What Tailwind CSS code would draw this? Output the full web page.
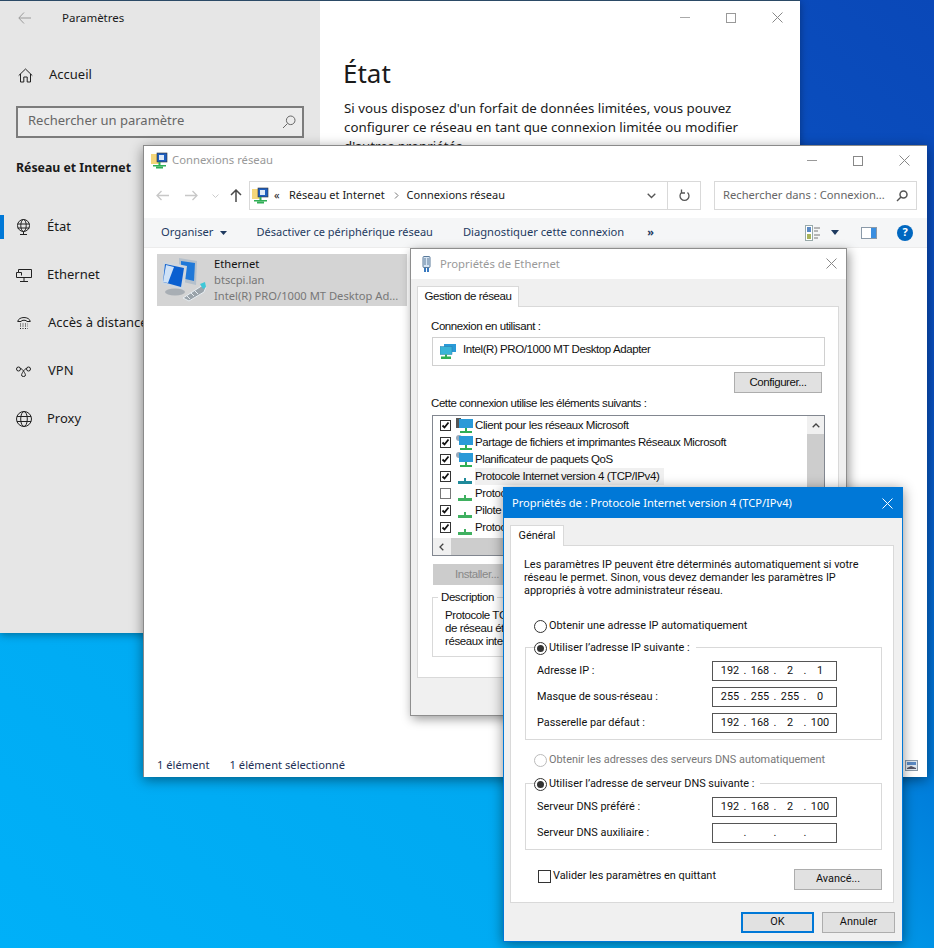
<!DOCTYPE html>
<html lang="fr">
<head>
  <meta charset="UTF-8" />
  <title>Propriétés de : Protocole Internet version 4 (TCP/IPv4)</title>
  <script src="https://cdn.jsdelivr.net/npm/@tailwindcss/browser@4"></script>
</head>
<body class="m-0 overflow-hidden">
<div class="relative w-[934px] h-[948px] overflow-hidden font-['Noto_Sans',sans-serif] text-[#1a1a1a] bg-[linear-gradient(222deg,#0a48b8_0%,#0a50c0_22%,#0078d8_42%,#00a8f0_62%,#00b0f8_100%)]">

  <!-- Parametres window -->
  <div class="absolute left-0 top-0 w-[800px] h-[633px] flex border-t border-[#2b4a66] shadow-[0_2px_8px_rgba(0,0,0,0.35)]">
    <div class="w-[320px] bg-[#e6e6e6] shrink-0 flex flex-col">
      <div class="h-[33px] flex items-center pl-[18px] gap-[31px]">
        <svg class="w-[13px] h-[12px]" viewBox="0 0 13 12" fill="none" stroke="#9a9a9a" stroke-width="1"><path d="M6 .5 .8 6 6 11.5M1 6h12"/></svg>
        <span class="text-[11.5px]">Paramètres</span>
      </div>
      <div class="h-[48px] mt-[17px] flex items-center pl-[18px] gap-[16px]">
        <svg class="w-[15px] h-[15px]" viewBox="0 0 15 15" fill="none" stroke="#222" stroke-width="1"><path d="M.7 7.6 7.5 1l6.8 6.6M2.5 6v8h3.3V9h3.4v5h3.3V6"/></svg>
        <span class="text-[13px]">Accueil</span>
      </div>
      <div class="mx-[16px] mt-[7px] h-[32px] border-2 border-[#7c7c7c] bg-[#ececec] flex items-center justify-between pl-[10px] pr-[6px]">
        <span class="text-[13px] text-[#666] -mt-[2px]">Rechercher un paramètre</span>
        <svg class="w-[14px] h-[14px]" viewBox="0 0 14 14" fill="none" stroke="#666" stroke-width="1"><circle cx="8.7" cy="5.3" r="4.3"/><path d="M5.5 8.5 1 13"/></svg>
      </div>
      <div class="pl-[16px] mt-[19px] h-[22px] flex items-center text-[12.3px] font-bold">Réseau et Internet</div>
      <div class="mt-[24px] flex flex-col">
        <div class="relative h-[48px] flex items-center pl-[16px] gap-[16px]">
          <div class="absolute left-0 top-[12px] w-[4px] h-[24px] bg-[#0078d7]"></div>
          <svg class="w-[15px] h-[16px]" viewBox="0 0 15 16" fill="none" stroke="#222" stroke-width="1"><circle cx="7.5" cy="6.5" r="6"/><ellipse cx="7.5" cy="6.5" rx="2.7" ry="6"/><path d="M1.5 5h12M1.5 9h12M7.5 12.5v3M4 15.5h7"/></svg>
          <span class="text-[13px]">État</span>
        </div>
        <div class="h-[48px] flex items-center pl-[16px] gap-[15px]">
          <svg class="w-[16px] h-[13px]" viewBox="0 0 16 13" fill="none" stroke="#222" stroke-width="1"><path d="M.5 3.5h2v-3h13v8H.5zM2.5 3.500h3v3M8 8.500v4M4 12.500h8"/></svg>
          <span class="text-[13px]">Ethernet</span>
        </div>
        <div class="h-[48px] flex items-center pl-[17px] gap-[17px] whitespace-nowrap">
          <svg class="w-[14px] h-[14px]" viewBox="0 0 14 14" fill="none" stroke="#222" stroke-width="1"><path d="M.7 5.5C1.5 .2 12.5 .2 13.3 5.5H10C9.8 3.8 4.2 3.8 4 5.5z"/><path stroke-dasharray="1 1.5" d="M3 8h8M3 10h8M3 12.5h8"/></svg>
          <span class="text-[13px]">Accès à distance</span>
        </div>
        <div class="h-[48px] flex items-center pl-[16px] gap-[17px]">
          <svg class="w-[15px] h-[11px]" viewBox="0 0 15 11" fill="none" stroke="#222" stroke-width="1"><circle cx="2.5" cy="3" r="2"/><circle cx="12.5" cy="3" r="2"/><path d="M4.500 2.500C6.500 2.500 9.500 8 9.500 9a2 1.500 0 0 1-4 0C5.500 8 8.500 2.500 10.500 2.500"/></svg>
          <span class="text-[13px]">VPN</span>
        </div>
        <div class="h-[48px] flex items-center pl-[16px] gap-[15px]">
          <svg class="w-[16px] h-[16px]" viewBox="0 0 16 16" fill="none" stroke="#222" stroke-width="1"><circle cx="8" cy="8" r="7.5"/><ellipse cx="8" cy="8" rx="3.3" ry="7.5"/><path d="M1 5.5h14M1 10.5h14"/></svg>
          <span class="text-[13px]">Proxy</span>
        </div>
      </div>
    </div>
    <div class="flex-1 bg-white relative">
      <div class="absolute right-0 top-0 flex h-[33px] items-center">
        <div class="w-[46px] flex justify-center"><div class="w-[10px] h-px bg-[#aaa]"></div></div>
        <div class="w-[46px] flex justify-center"><div class="w-[10px] h-[10px] border border-[#999]"></div></div>
        <div class="w-[46px] flex justify-center"><svg class="w-[11px] h-[11px]" viewBox="0 0 11 11" stroke="#888"><path d="M.5.5l10 10M10.5.5l-10 10"/></svg></div>
      </div>
      <h1 class="pl-[23px] pt-[54px] text-[26px] leading-[36px] font-normal">État</h1>
      <p class="pl-[24px] pt-[8px] text-[13.3px] leading-[19px] w-[420px]">Si vous disposez d'un forfait de données limitées, vous pouvez configurer ce réseau en tant que connexion limitée ou modifier d'autres propriétés.</p>
    </div>
  </div>

  <!-- Explorer window -->
  <div class="absolute left-[143px] top-[145px] w-[784px] h-[632px] bg-white border-l border-t border-[#8a8a8a] shadow-[0_3px_12px_rgba(0,0,0,0.45)] flex flex-col">
    <div class="h-[35px] shrink-0 flex items-center pl-[7px] pb-[6px] gap-[4px] relative">
      <svg class="w-[17px] h-[17px]" viewBox="0 0 17 17"><path fill="#f4d67a" d="M0 2h7l1 1h1v9H0z"/><rect x="6" y="1" width="10" height="9" fill="#1f5fbf" stroke="#333" stroke-width=".6"/><rect x="8" y="3" width="5" height="5" fill="#dfeaf8"/><path fill="#2fae55" d="M2 13h13v1.5H2zM7.5 10h2v3h-2z"/><rect x="5" y="14.5" width="7" height="2" fill="#2fae55"/></svg>
      <span class="text-[11.3px] text-[#999]">Connexions réseau</span>
      <div class="absolute right-0 top-0 h-[29px] flex items-center">
        <div class="w-[46px] flex justify-center"><div class="w-[10px] h-px bg-[#999]"></div></div>
        <div class="w-[46px] flex justify-center"><div class="w-[10px] h-[10px] border border-[#888]"></div></div>
        <div class="w-[46px] flex justify-center"><svg class="w-[11px] h-[11px]" viewBox="0 0 11 11" stroke="#888"><path d="M.5.5l10 10M10.5.5l-10 10"/></svg></div>
      </div>
    </div>
    <div class="h-[29px] shrink-0 flex items-center">
      <div class="w-[105px] flex items-center pl-[12px] shrink-0">
        <svg class="w-[13px] h-[11px]" viewBox="0 0 13 11" fill="none" stroke="#c8c8c8" stroke-width="1.3"><path d="M5.5 1 1 5.5l4.5 4.5M1 5.5h12"/></svg>
        <svg class="w-[13px] h-[11px] ml-[16px]" viewBox="0 0 13 11" fill="none" stroke="#c8c8c8" stroke-width="1.3"><path d="M7.5 1 12 5.5 7.5 10M12 5.5H0"/></svg>
        <svg class="w-[7px] h-[4px] ml-[14px]" viewBox="0 0 7 4" fill="none" stroke="#ccc"><path d="M.5.5 3.5 3.5 6.5.5"/></svg>
        <svg class="w-[12px] h-[13px] ml-[11px]" viewBox="0 0 12 13" fill="none" stroke="#4a4a4a" stroke-width="1.5"><path d="M1 6 6 1l5 5M6 1v12"/></svg>
      </div>
      <div class="w-[452px] h-[29px] border border-[#d9d9d9] flex items-center shrink-0">
        <svg class="w-[17px] h-[17px] ml-[2px]" viewBox="0 0 17 17"><path fill="#f4d67a" d="M0 2h7l1 1h1v9H0z"/><rect x="6" y="1" width="10" height="9" fill="#1f5fbf" stroke="#333" stroke-width=".6"/><rect x="8" y="3" width="5" height="5" fill="#dfeaf8"/><path fill="#2fae55" d="M2 13h13v1.5H2zM7.5 10h2v3h-2z"/><rect x="5" y="14.5" width="7" height="2" fill="#2fae55"/></svg>
        <span class="text-[11px] ml-[5px] w-[15px] leading-none -mt-[3px]">«</span>
        <span class="text-[11px]">Réseau et Internet</span>
        <svg class="w-[5px] h-[7px] ml-[9px] mr-[8px]" viewBox="0 0 5 7" fill="none" stroke="#777"><path d="M1 .5 4 3.5 1 6.5"/></svg>
        <span class="text-[11px]">Connexions réseau</span>
        <svg class="w-[9px] h-[6px] ml-auto mr-[11px]" viewBox="0 0 9 6" fill="none" stroke="#555" stroke-width="1.3"><path d="M.7.7 4.5 4.5 8.3.7"/></svg>
        <div class="w-[33px] h-full border-l border-[#d9d9d9] flex items-center justify-center">
          <svg class="w-[11px] h-[13px]" viewBox="0 0 11 13" fill="none" stroke="#555" stroke-width="1.3"><path d="M2.5 3.5a4.5 4.5 0 1 0 6 0M2.5 .5v3.5H6"/></svg>
        </div>
      </div>
      <div class="w-[203px] ml-[13px] h-[29px] border border-[#d9d9d9] flex items-center justify-between pl-[8px] pr-[8px]">
        <span class="text-[11.2px] text-[#666] whitespace-nowrap">Rechercher dans : Connexion...</span>
        <svg class="w-[12px] h-[12px] shrink-0" viewBox="0 0 12 12" fill="none" stroke="#555" stroke-width="1.5"><circle cx="7.5" cy="4.5" r="3.5"/><path d="M5 7 1 11"/></svg>
      </div>
    </div>
    <div class="h-[30px] mt-[8px] shrink-0 bg-[#f5f6f7] border-b border-[#ececec] flex items-center text-[11.2px] text-[#1e3a5f]">
      <span class="ml-[17px]">Organiser</span>
      <svg class="w-[7px] h-[4px] ml-[6px]" viewBox="0 0 7 4" fill="#1e3a5f"><path d="M0 0h7L3.5 4z"/></svg>
      <span class="ml-[30px] text-[11px]">Désactiver ce périphérique réseau</span>
      <span class="ml-[30px]">Diagnostiquer cette connexion</span>
      <span class="ml-[23px] text-[11px] leading-none -mt-[3px] font-bold">»</span>
      <svg class="w-[16px] h-[16px] ml-auto" viewBox="0 0 16 16" fill="none"><rect x=".5" y=".5" width="7" height="15" fill="#fff" stroke="#9aa" /><rect x="2" y="2" width="4" height="5" fill="#5b8ac4"/><rect x="2" y="9" width="4" height="5" fill="#a8b35a"/><path stroke="#777" d="M9 3h6M9 6h4M9 10h6M9 13h4"/></svg>
      <svg class="w-[8px] h-[5px] ml-[10px]" viewBox="0 0 8 5" fill="#1e3a5f"><path d="M0 0h8L4 5z"/></svg>
      <svg class="w-[16px] h-[12px] ml-[22px]" viewBox="0 0 16 12"><rect x=".5" y=".5" width="15" height="11" fill="#fff" stroke="#8a99a8"/><rect x="10" y="1" width="5" height="10" fill="#3a8ee0"/></svg>
      <div class="w-[16px] h-[16px] ml-[20px] mr-[14px] rounded-full bg-[#0067c0] text-white text-[11px] font-bold flex items-center justify-center">?</div>
    </div>
    <div class="flex-1 relative">
      <div class="absolute left-[13px] top-[6px] w-[250px] h-[52px] bg-[#d4d4d4] flex items-center">
        <svg class="w-[46px] h-[46px] ml-[4px] shrink-0" viewBox="0 0 46 46">
          <path fill="#b4c0cc" d="M18 1l18 3-1 24-17-4z"/>
          <path fill="#1f78d8" d="M20 4l14 2-1 18-13-3z"/>
          <path fill="#d0d6dc" d="M2 4l24 5-3 24L0 27z"/>
          <path fill="#0a5fd0" d="M4 7l19 4-3 19L2 25z"/>
          <path fill="#cfe2f7" d="M5 8l8 2-6 16-5-1z"/>
          <ellipse cx="14" cy="35" rx="10" ry="3.5" fill="#a8aeb4"/>
          <path fill="#9aa3aa" stroke="#e8eef3" d="M22 41 42 28l3 2-2 5-15 9z"/>
          <path stroke="#e8eef3" d="M26 39l3 3M30 36l3 3M34 34l3 3"/>
          <path fill="#3ec8d8" d="M39 27l5-2 1 5-3 2z"/>
        </svg>
        <div class="ml-[7px] flex flex-col text-[11.2px] leading-[16px] whitespace-nowrap">
          <span class="text-[#111]">Ethernet</span>
          <span class="text-[#777]">btscpi.lan</span>
          <span class="text-[#777]">Intel(R) PRO/1000 MT Desktop Ad...</span>
        </div>
      </div>
      <div class="absolute left-[13px] bottom-[3px] flex text-[11.2px] text-[#1e2f55] gap-[20px]">
        <span>1 élément</span>
        <span>1 élément sélectionné</span>
      </div>
      <svg class="absolute right-[9px] bottom-[6px] w-[13px] h-[11px]" viewBox="0 0 13 11"><rect x=".5" y=".5" width="12" height="10" fill="#dfe8f0" stroke="#8a99a8"/><rect x="2" y="2" width="9" height="3" fill="#5b8ac4"/><path fill="#556" d="M2 8l4-2 5 2v1H2z"/></svg>
    </div>
  </div>

  <!-- Ethernet properties dialog -->
  <div class="absolute left-[410px] top-[248px] w-[437px] h-[468px] bg-[#f0f0f0] border border-[#8e8e8e] shadow-[2px_3px_10px_rgba(0,0,0,0.4)] flex flex-col font-['Liberation_Sans',sans-serif] text-[11.5px] tracking-[-0.42px] text-[#111]">
    <div class="h-[30px] shrink-0 bg-white flex items-center pl-[10px] gap-[8px] relative font-['Noto_Sans',sans-serif] tracking-normal">
      <svg class="w-[11px] h-[17px]" viewBox="0 0 11 17" fill="none"><rect x="2" y=".5" width="7" height="11" rx="1" fill="#d6e4f2" stroke="#5a7a9a"/><path stroke="#5a7a9a" d="M4 2v7M7 2v7"/><path stroke="#3a7ac0" stroke-width="2" d="M4 12v4M7 12v4"/></svg>
      <span class="text-[11.3px] text-[#999]">Propriétés de Ethernet</span>
      <svg class="absolute right-[9px] top-[9px] w-[11px] h-[11px]" viewBox="0 0 11 11" stroke="#888"><path d="M.5.5l10 10M10.5.5l-10 10"/></svg>
    </div>
    <div class="px-[6px] pt-[7px] flex-1 flex flex-col">
      <div class="relative z-10 w-[102px] h-[21px] -mb-px bg-white border border-b-0 border-[#d9d9d9] flex items-center justify-center">Gestion de réseau</div>
      <div class="w-[422px] h-[372px] bg-white border border-[#d9d9d9] px-[14px] relative">
        <div class="h-[30px] flex items-center pt-[10px] -ml-[1px]">Connexion en utilisant :</div>
        <div class="w-[393px] h-[29px] border border-[#d0d0d0] flex items-center pl-[7px] gap-[7px]">
          <svg class="w-[16px] h-[15px]" viewBox="0 0 16 15"><rect x="4" y="0" width="12" height="8" fill="#2a9ad8"/><rect x="0" y="2.5" width="12" height="8" fill="#3ab4d8" stroke="#2a7aa8" stroke-width=".5"/><path fill="#2fae55" d="M5 10.5h2v2H5zM1 12.5h10V15H1z"/></svg>
          <span class="-mt-[3px]">Intel(R) PRO/1000 MT Desktop Adapter</span>
        </div>
        <div class="flex justify-end pr-[2px] mt-[6px]">
          <div class="w-[88px] h-[21px] bg-[#e1e1e1] border border-[#adadad] flex items-center justify-center">Configurer...</div>
        </div>
        <div class="h-[22px] flex items-center -ml-[1px]">Cette connexion utilise les éléments suivants :</div>
        <div class="w-[393px] h-[141px] border border-[#828790] relative overflow-hidden pt-[1px]">
          <div class="h-[17px] flex items-center pl-[7px] gap-[5px]"><svg class="w-[11px] h-[11px]" viewBox="0 0 11 11" fill="#fff"><rect x=".5" y=".5" width="10" height="10" stroke="#333"/><path fill="none" stroke="#111" stroke-width="1.8" d="M2.5 5.5l2 2 4-5"/></svg><svg class="w-[17px] h-[16px]" viewBox="0 0 17 16"><rect x="0" y="0" width="5" height="10" fill="#555"/><rect x="3" y="1" width="14" height="9" fill="#2a9ad8"/><path fill="#2fae55" d="M9 10h2v3H9zM4 13h12v2H4z"/></svg><span class="-ml-[3px]">Client pour les réseaux Microsoft</span></div>
          <div class="h-[17px] flex items-center pl-[7px] gap-[5px]"><svg class="w-[11px] h-[11px]" viewBox="0 0 11 11" fill="#fff"><rect x=".5" y=".5" width="10" height="10" stroke="#333"/><path fill="none" stroke="#111" stroke-width="1.8" d="M2.5 5.5l2 2 4-5"/></svg><svg class="w-[17px] h-[16px]" viewBox="0 0 17 16"><circle cx="3" cy="3" r="3" fill="#9ab"/><rect x="3" y="1" width="14" height="9" fill="#2a9ad8"/><path fill="#2fae55" d="M9 10h2v3H9zM4 13h12v2H4z"/></svg><span class="-ml-[3px]">Partage de fichiers et imprimantes Réseaux Microsoft</span></div>
          <div class="h-[17px] flex items-center pl-[7px] gap-[5px]"><svg class="w-[11px] h-[11px]" viewBox="0 0 11 11" fill="#fff"><rect x=".5" y=".5" width="10" height="10" stroke="#333"/><path fill="none" stroke="#111" stroke-width="1.8" d="M2.5 5.5l2 2 4-5"/></svg><svg class="w-[17px] h-[16px]" viewBox="0 0 17 16"><circle cx="3" cy="3" r="3" fill="#9ab"/><rect x="3" y="1" width="14" height="9" fill="#2a9ad8"/><path fill="#2fae55" d="M9 10h2v3H9zM4 13h12v2H4z"/></svg><span class="-ml-[3px]">Planificateur de paquets QoS</span></div>
          <div class="h-[17px] flex items-center pl-[7px] gap-[5px]"><svg class="w-[11px] h-[11px]" viewBox="0 0 11 11" fill="#fff"><rect x=".5" y=".5" width="10" height="10" stroke="#333"/><path fill="none" stroke="#111" stroke-width="1.8" d="M2.5 5.5l2 2 4-5"/></svg><svg class="w-[17px] h-[16px]" viewBox="0 0 17 16"><path fill="#1f8a9a" d="M8 9h2v3H8zM2 12h14v3H2z"/></svg><span class="bg-[#f0f0f0] h-[17px] flex items-center pr-[5px] -ml-[3px]">Protocole Internet version 4 (TCP/IPv4)</span></div>
          <div class="h-[17px] flex items-center pl-[7px] gap-[5px]"><span class="w-[11px] h-[11px] border border-[#777] bg-white"></span><svg class="w-[17px] h-[16px]" viewBox="0 0 17 16"><path fill="#3fb060" d="M8 9h2v3H8zM2 12h14v3H2z"/></svg><span class="-ml-[3px]">Protocole</span></div>
          <div class="h-[17px] flex items-center pl-[7px] gap-[5px]"><svg class="w-[11px] h-[11px]" viewBox="0 0 11 11" fill="#fff"><rect x=".5" y=".5" width="10" height="10" stroke="#333"/><path fill="none" stroke="#111" stroke-width="1.8" d="M2.5 5.5l2 2 4-5"/></svg><svg class="w-[17px] h-[16px]" viewBox="0 0 17 16"><path fill="#3fb060" d="M8 9h2v3H8zM2 12h14v3H2z"/></svg><span class="-ml-[3px]">Pilote</span></div>
          <div class="h-[17px] flex items-center pl-[7px] gap-[5px]"><svg class="w-[11px] h-[11px]" viewBox="0 0 11 11" fill="#fff"><rect x=".5" y=".5" width="10" height="10" stroke="#333"/><path fill="none" stroke="#111" stroke-width="1.8" d="M2.5 5.5l2 2 4-5"/></svg><svg class="w-[17px] h-[16px]" viewBox="0 0 17 16"><path fill="#3fb060" d="M8 9h2v3H8zM2 12h14v3H2z"/></svg><span class="-ml-[3px]">Protocole</span></div>
          <div class="absolute right-0 top-0 w-[17px] h-full bg-[#f0f0f0] flex flex-col items-center pt-[7px]">
            <svg class="w-[8px] h-[5px]" viewBox="0 0 8 5" fill="none" stroke="#444" stroke-width="1.3"><path d="M.7 4.3 4 1l3.3 3.3"/></svg>
            <div class="w-full h-[80px] bg-[#cdcdcd] mt-[6px]"></div>
          </div>
          <div class="absolute left-0 bottom-0 w-full h-[17px] bg-[#f0f0f0] flex items-center pl-[6px]">
            <svg class="w-[5px] h-[8px]" viewBox="0 0 5 8" fill="none" stroke="#444" stroke-width="1.3"><path d="M4.3.7 1 4l3.3 3.3"/></svg>
            <div class="w-[300px] h-full bg-[#cdcdcd] ml-[7px]"></div>
          </div>
        </div>
        <div class="w-[88px] h-[21px] mt-[8px] ml-[1px] bg-[#cccccc] text-[#888] flex items-center justify-center">Installer...</div>
        <div class="relative w-[393px] h-[60px] mt-[12px] border border-[#d9d9d9] pl-[12px] pt-[11px] leading-[13px]">
          <span class="absolute left-[5px] -top-[7px] bg-white px-[3px] leading-[13px]">Description</span>
          <div>Protocole TCP/IP</div>
          <div>de réseau étendu</div>
          <div>réseaux interconnectés</div>
        </div>
      </div>
    </div>
  </div>

  <!-- IPv4 dialog -->
  <div class="absolute left-[503px] top-[487px] w-[400px] h-[455px] bg-[#f0f0f0] border border-[#0078d7] shadow-[0_2px_12px_rgba(0,0,0,0.45)] flex flex-col font-['Roboto',sans-serif] text-[10.9px] text-[#111]">
    <div class="h-[30px] shrink-0 bg-[#0078d7] flex items-center justify-between pl-[8px] pr-[9px] text-white font-['Noto_Sans',sans-serif]">
      <span class="text-[11.1px]">Propriétés de : Protocole Internet version 4 (TCP/IPv4)</span>
      <svg class="w-[11px] h-[11px]" viewBox="0 0 11 11" stroke="#fff"><path d="M.5.5l10 10M10.5.5l-10 10"/></svg>
    </div>
    <div class="px-[6px] pt-[7px] flex-1 flex flex-col">
      <div class="relative z-10 w-[54px] h-[21px] -mb-px bg-white border border-b-0 border-[#d9d9d9] flex items-center justify-center">Général</div>
      <div class="w-[384px] h-[358px] bg-white border border-[#d9d9d9] pl-[14px] pr-[10px]">
        <p class="pt-[12px] leading-[13px] w-[350px] -ml-[1px]">Les paramètres IP peuvent être déterminés automatiquement si votre réseau le permet. Sinon, vous devez demander les paramètres IP appropriés à votre administrateur réseau.</p>
        <div class="h-[21px] mt-[19px] flex items-center pl-[9px] gap-[2px]">
          <span class="w-[13px] h-[13px] rounded-full border border-[#333] bg-white"></span><span>Obtenir une adresse IP automatiquement</span>
        </div>
        <div class="relative w-[357px] h-[93px] mt-[10px] border border-[#d9d9d9] pl-[11px] pr-[44px] pt-[13px]">
          <div class="absolute left-[8px] -top-[8px] h-[16px] bg-white flex items-center gap-[2px] pr-[6px]">
            <span class="w-[13px] h-[13px] rounded-full border border-[#333] bg-white flex items-center justify-center"><span class="w-[7px] h-[7px] rounded-full bg-[#333]"></span></span><span>Utiliser l’adresse IP suivante :</span>
          </div>
          <div class="h-[20px] flex items-center justify-between mb-[6px]">
            <span>Adresse IP :</span>
            <div class="w-[125px] h-[20px] border border-[#555] flex items-center pl-[5px]"><span class="w-[24px] text-center">192</span><span class="w-[6px] text-center">.</span><span class="w-[24px] text-center">168</span><span class="w-[6px] text-center">.</span><span class="w-[24px] text-center">2</span><span class="w-[6px] text-center">.</span><span class="w-[24px] text-center">1</span></div>
          </div>
          <div class="h-[20px] flex items-center justify-between mb-[6px]">
            <span>Masque de sous-réseau :</span>
            <div class="w-[125px] h-[20px] border border-[#555] flex items-center pl-[5px]"><span class="w-[24px] text-center">255</span><span class="w-[6px] text-center">.</span><span class="w-[24px] text-center">255</span><span class="w-[6px] text-center">.</span><span class="w-[24px] text-center">255</span><span class="w-[6px] text-center">.</span><span class="w-[24px] text-center">0</span></div>
          </div>
          <div class="h-[20px] flex items-center justify-between">
            <span>Passerelle par défaut :</span>
            <div class="w-[125px] h-[20px] border border-[#555] flex items-center pl-[5px]"><span class="w-[24px] text-center">192</span><span class="w-[6px] text-center">.</span><span class="w-[24px] text-center">168</span><span class="w-[6px] text-center">.</span><span class="w-[24px] text-center">2</span><span class="w-[6px] text-center">.</span><span class="w-[24px] text-center">100</span></div>
          </div>
        </div>
        <div class="h-[21px] mt-[10px] flex items-center pl-[9px] gap-[2px] text-[#777]">
          <span class="w-[13px] h-[13px] rounded-full border border-[#bbb] bg-white"></span><span>Obtenir les adresses des serveurs DNS automatiquement</span>
        </div>
        <div class="relative w-[357px] h-[67px] mt-[12px] border border-[#d9d9d9] pl-[11px] pr-[44px] pt-[13px]">
          <div class="absolute left-[8px] -top-[8px] h-[16px] bg-white flex items-center gap-[2px] pr-[6px]">
            <span class="w-[13px] h-[13px] rounded-full border border-[#333] bg-white flex items-center justify-center"><span class="w-[7px] h-[7px] rounded-full bg-[#333]"></span></span><span>Utiliser l’adresse de serveur DNS suivante :</span>
          </div>
          <div class="h-[20px] flex items-center justify-between mb-[6px]">
            <span>Serveur DNS préféré :</span>
            <div class="w-[125px] h-[20px] border border-[#555] flex items-center pl-[5px]"><span class="w-[24px] text-center">192</span><span class="w-[6px] text-center">.</span><span class="w-[24px] text-center">168</span><span class="w-[6px] text-center">.</span><span class="w-[24px] text-center">2</span><span class="w-[6px] text-center">.</span><span class="w-[24px] text-center">100</span></div>
          </div>
          <div class="h-[20px] flex items-center justify-between">
            <span>Serveur DNS auxiliaire :</span>
            <div class="w-[125px] h-[20px] border border-[#555] flex items-center pl-[5px]"><span class="w-[24px]"></span><span class="w-[6px] text-center">.</span><span class="w-[24px]"></span><span class="w-[6px] text-center">.</span><span class="w-[24px]"></span><span class="w-[6px] text-center">.</span></div>
          </div>
        </div>
        <div class="flex items-start justify-between mt-[18px]">
          <div class="flex items-center pl-[13px] gap-[2px]">
            <span class="w-[13px] h-[13px] border border-[#333] bg-white"></span><span>Valider les paramètres en quittant</span>
          </div>
          <div class="w-[88px] h-[21px] mt-[1px] bg-[#e1e1e1] border border-[#adadad] flex items-center justify-center mr-[1px]">Avancé...</div>
        </div>
      </div>
      <div class="flex justify-end gap-[8px] mt-[9px] pr-[1px]">
        <div class="w-[73px] h-[21px] bg-[#e1e1e1] border-2 border-[#0078d7] flex items-center justify-center">OK</div>
        <div class="w-[73px] h-[21px] bg-[#e1e1e1] border border-[#adadad] flex items-center justify-center">Annuler</div>
      </div>
    </div>
  </div>

</div>
</body>
</html>
